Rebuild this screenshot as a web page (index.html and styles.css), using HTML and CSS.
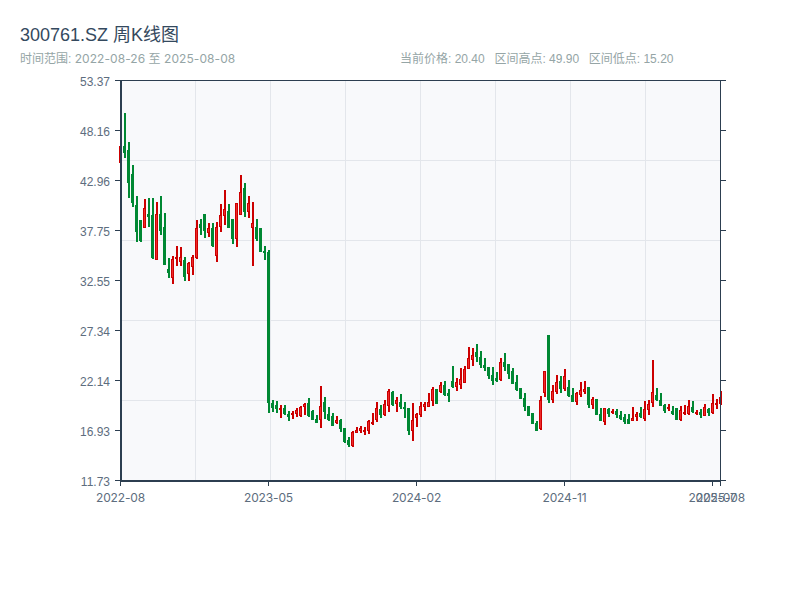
FILE: index.html
```html
<!DOCTYPE html>
<html lang="en">
<head>
  <meta charset="UTF-8">
  <meta name="viewport" content="width=device-width, initial-scale=1.0">
  <title>300761.SZ 周K线图</title>
  <link rel="stylesheet" href="styles.css">
</head>
<body>
  <div id="page">
    <h1 class="title">300761.SZ 周K线图</h1>
    <div class="meta">
      <span>时间范围: <span class="dates">2022-08-26 至 2025-08-08</span></span>
      <div class="stats">
        <span>当前价格: 20.40</span>
        <span>区间高点: 49.90</span>
        <span>区间低点: 15.20</span>
      </div>
    </div>
    <svg id="chart" viewBox="0 70 800 440" width="800" height="440">
      <rect class="plot-bg" x="121" y="80" width="600" height="400"></rect>
      <g id="grid"></g>
      <g id="candles"></g>
      <g id="axes"></g>
      <g id="labels"></g>
    </svg>
  </div>

  <script>
    const NS = 'http://www.w3.org/2000/svg';

    // screen rows of each weekly bar: high, body top, body bottom, low, r = up / g = down
    const bars = [
      [145,146,163,164,'r'],[113,146,153,158,'g'],[142,150,183,198,'g'],[165,174,203,207,'g'],
      [196,205,232,242,'g'],[220,220,241,242,'g'],[199,208,228,228,'r'],[198,214,217,227,'g'],
      [198,215,258,259,'g'],[202,214,260,260,'r'],[196,214,231,235,'g'],[213,227,265,265,'g'],
      [258,269,273,278,'g'],[256,259,278,284,'r'],[246,257,259,266,'r'],[247,257,262,266,'r'],
      [257,260,277,281,'g'],[262,263,274,281,'r'],[255,257,267,275,'r'],[220,228,258,259,'r'],
      [219,224,228,235,'g'],[214,214,231,238,'g'],[223,228,233,237,'r'],[223,228,246,247,'g'],
      [222,227,256,262,'r'],[204,215,227,232,'r'],[190,209,216,225,'r'],[204,211,228,228,'g'],
      [219,219,239,244,'g'],[203,203,239,247,'r'],[175,192,215,215,'r'],[183,188,212,217,'g'],
      [196,203,212,218,'r'],[202,223,228,266,'r'],[219,227,239,241,'g'],[228,228,252,252,'g'],
      [246,251,253,260,'g'],[250,252,403,413,'g'],[400,403,408,412,'g'],[401,405,409,413,'g'],
      [405,408,410,418,'r'],[405,408,414,415,'g'],[411,414,417,421,'g'],[411,413,415,419,'r'],
      [408,410,414,417,'r'],[406,407,416,417,'r'],[403,404,407,415,'r'],[398,403,416,417,'g'],
      [410,411,420,420,'g'],[415,419,423,423,'g'],[386,406,420,428,'r'],[397,402,412,419,'g'],
      [407,414,420,421,'g'],[413,416,426,426,'g'],[416,420,423,424,'r'],[419,420,429,432,'g'],
      [428,428,442,443,'g'],[437,440,445,447,'g'],[431,432,446,447,'r'],[427,430,433,433,'r'],
      [426,428,431,433,'r'],[427,430,431,435,'r'],[420,421,431,434,'r'],[413,422,423,425,'r'],
      [402,408,420,422,'r'],[405,409,415,418,'g'],[400,404,415,416,'r'],[389,391,406,412,'r'],
      [391,392,405,406,'g'],[397,400,404,412,'r'],[394,402,407,409,'g'],[402,407,409,418,'g'],
      [408,408,431,435,'g'],[403,420,431,441,'r'],[413,414,418,427,'r'],[402,406,415,417,'r'],
      [402,404,407,411,'r'],[393,402,407,407,'r'],[387,389,401,406,'r'],[389,389,404,404,'g'],
      [382,385,392,393,'r'],[381,385,395,396,'g'],[389,393,396,402,'g'],[366,381,387,388,'g'],
      [378,382,387,391,'r'],[368,379,385,389,'r'],[366,369,383,383,'r'],[347,358,369,369,'r'],
      [348,355,360,366,'r'],[344,352,357,362,'g'],[351,357,365,368,'g'],[358,365,368,371,'g'],
      [367,367,376,379,'g'],[367,375,381,385,'g'],[372,378,381,382,'g'],[358,362,380,381,'r'],
      [353,362,367,371,'g'],[364,364,374,379,'g'],[368,371,384,384,'g'],[375,382,390,391,'g'],
      [388,388,399,399,'g'],[393,398,407,411,'g'],[406,406,416,416,'g'],[413,413,424,424,'g'],
      [421,423,431,431,'g'],[396,400,429,430,'r'],[371,371,393,397,'r'],[335,335,400,403,'g'],
      [385,391,400,403,'r'],[375,382,392,394,'r'],[376,381,389,393,'g'],[369,376,389,391,'r'],
      [380,387,396,397,'g'],[388,395,402,402,'g'],[392,393,402,405,'r'],[382,390,395,397,'r'],
      [381,389,392,394,'r'],[387,387,405,408,'g'],[397,399,405,409,'r'],[399,399,415,415,'g'],
      [408,414,421,421,'g'],[408,408,422,425,'r'],[408,409,414,417,'g'],[409,411,413,414,'r'],
      [409,411,415,418,'g'],[411,415,419,420,'g'],[414,417,422,424,'g'],[414,419,424,424,'g'],
      [407,418,421,421,'r'],[412,414,417,421,'r'],[407,413,417,418,'g'],[401,409,419,421,'r'],
      [400,404,410,415,'r'],[360,392,403,407,'r'],[388,395,400,401,'g'],[393,400,406,406,'g'],
      [404,405,411,413,'g'],[404,407,409,411,'r'],[406,411,414,415,'g'],[408,408,420,420,'g'],
      [406,410,420,421,'r'],[405,412,414,415,'r'],[400,406,414,415,'r'],[401,407,412,413,'g'],
      [410,412,414,415,'r'],[409,412,415,418,'g'],[404,407,416,416,'r'],[408,409,413,416,'g'],
      [394,403,413,414,'r'],[399,403,405,409,'r'],[391,397,404,405,'r']
    ];

    const yLabels = ['53.37', '48.16', '42.96', '37.75', '32.55', '27.34', '22.14', '16.93', '11.73'];
    const xLabels = [
      [120.5, '2022-08'], [268.5, '2023-05'], [416.5, '2024-02'],
      [564.5, '2024-11'], [712.5, '2025-07'], [720.5, '2025-08']
    ];

    const add = (parent, tag, attrs, text) => {
      const el = document.createElementNS(NS, tag);
      Object.keys(attrs).forEach(k => el.setAttribute(k, attrs[k]));
      if (text) el.textContent = text;
      parent.appendChild(el);
      return el;
    };

    const line = (parent, cls, x1, y1, x2, y2) => add(parent, 'line', { class: cls, x1, y1, x2, y2 });

    const grid = document.getElementById('grid');
    for (let x = 195.5; x < 700; x += 75) line(grid, 'split', x, 80, x, 480);
    for (let y = 160.5; y < 480; y += 80) line(grid, 'split', 121, y, 720, y);

    const candles = document.getElementById('candles');
    bars.forEach((bar, i) => {
      const x = 120.5 + i * 4;
      const g = add(candles, 'g', { class: bar[4] === 'r' ? 'up' : 'down' });
      line(g, 'wick', x + 0.5, bar[0], x + 0.5, bar[3]);
      add(g, 'rect', { x: x - 1, y: bar[1] + 0.5, width: 2, height: Math.max(bar[2] - bar[1] - 1, 1) });
    });

    const axes = document.getElementById('axes');
    const labels = document.getElementById('labels');
    line(axes, 'axis', 115, 80.5, 726, 80.5);
    line(axes, 'axis', 720.5, 80, 720.5, 481);
    yLabels.forEach((label, i) => {
      const y = 80.5 + i * 50;
      line(axes, 'axis', 115, y, 121, y);
      line(axes, 'axis', 720, y, 726, y);
      add(labels, 'text', { class: 'tick-y', x: 110, y: y + 5.5 }, label);
    });
    line(axes, 'axis-bold', 121, 80, 121, 482);
    line(axes, 'axis-bold', 120, 481, 721, 481);
    xLabels.forEach(([x, label]) => {
      line(axes, 'axis', x, 482, x, 486);
      add(labels, 'text', { class: 'tick-x', x, y: 502 }, label);
    });
  </script>
</body>
</html>
```

FILE: styles.css
```css
body {
  margin: 0;
  background-color: #fff;
  font-family: "Liberation Sans", "Noto Sans CJK SC", sans-serif;
}

#page {
  width: 800px;
  height: 600px;
  overflow: hidden;
}

.title {
  margin: 0;
  padding: 23px 20px 0;
  font-size: 18px;
  font-weight: 400;
  line-height: 24px;
  color: #34495e;
}

.meta {
  display: grid;
  grid-template-columns: 380px 1fr;
  height: 23px;
  padding: 0 20px;
  font-size: 12px;
  line-height: 24px;
  color: #95a5a6;
}

.dates {
  font-family: Inter, "Noto Sans CJK SC", sans-serif;
  letter-spacing: 0.06px;
}

.stats {
  display: flex;
  gap: 9.7px;
}

#chart {
  display: block;
}

.plot-bg {
  fill: #f8f9fb;
}

.split {
  stroke: #e3e6eb;
  stroke-width: 1;
}

.axis {
  stroke: #2c3e50;
  stroke-width: 1;
}

.axis-bold {
  stroke: #2c3e50;
  stroke-width: 2;
}

.wick {
  stroke-width: 2;
}

.up .wick,
.up rect {
  stroke: #cc0000;
}

.up rect {
  fill: #ee2a2a;
}

.down .wick,
.down rect {
  stroke: #008833;
}

.down rect {
  fill: #008833;
}

.tick-y,
.tick-x {
  font-size: 12px;
  fill: #5d6d7e;
}

.tick-y {
  text-anchor: end;
}

.tick-x {
  font-family: Inter, sans-serif;
  letter-spacing: -0.15px;
  text-anchor: middle;
}
```
